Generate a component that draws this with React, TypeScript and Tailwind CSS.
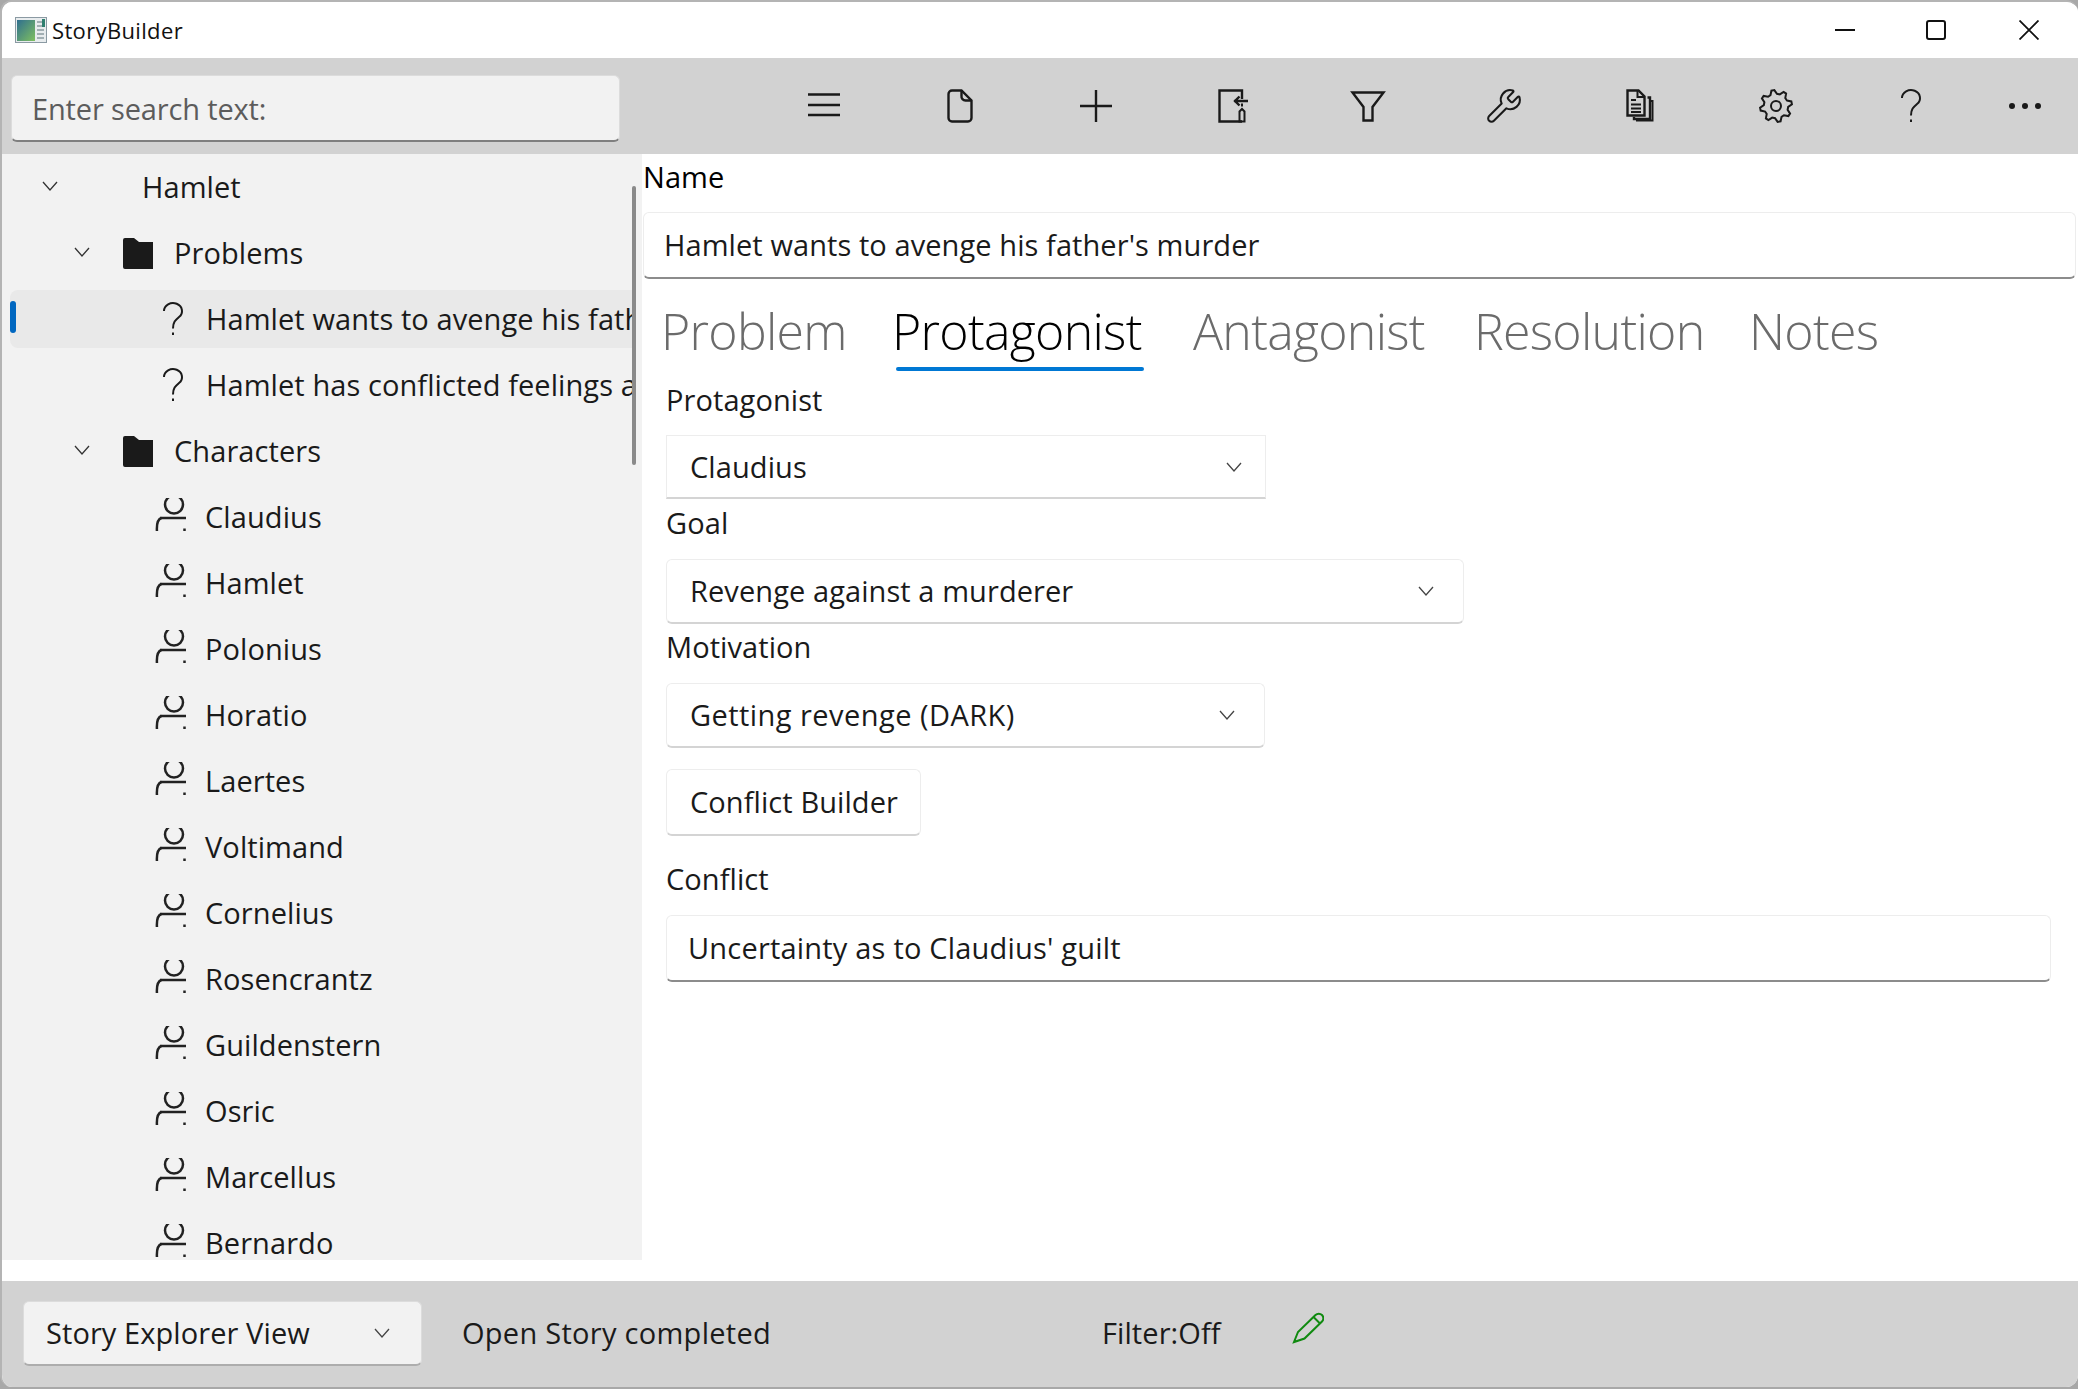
import React from 'react';
import { Wrench } from 'lucide-react';

const characters = ['Claudius', 'Hamlet', 'Polonius', 'Horatio', 'Laertes', 'Voltimand', 'Cornelius', 'Rosencrantz', 'Guildenstern', 'Osric', 'Marcellus', 'Bernardo'];

const Icon: React.FC<{ children: React.ReactNode; className?: string }> = ({ children, className }) => (
    <svg viewBox="0 0 40 40" fill="none" stroke="#1a1a1a" strokeWidth="2.4" className={className ?? 'w-10 h-10'}>
        {children}
    </svg>
);

const gearPath = () => {
    const pts: string[] = [];
    for (let i = 0; i < 8; i++) {
        const a = (i * Math.PI) / 4 - Math.PI / 8;
        const step = Math.PI / 4;
        [[-0.1, 12.2], [0.13, 16], [0.37, 16], [0.6, 12.2]].forEach(([t, r]) => {
            const th = a + t * step;
            pts.push(`${(20 + r * Math.cos(th)).toFixed(2)} ${(20 + r * Math.sin(th)).toFixed(2)}`);
        });
    }
    return `M${pts.join('L')}Z`;
};

const HelpGlyph: React.FC<{ className?: string }> = ({ className }) => (
    <Icon className={className}>
        <path d="M11 12a9 8 0 1 1 15 6c-3.500 3-6 5-6 11.500" strokeWidth="2" />
        <path d="M20 33.500v2.500" strokeWidth="2" />
    </Icon>
);

const Chevron: React.FC<{ className?: string; color?: string }> = ({ className, color }) => (
    <svg viewBox="0 0 20 12" fill="none" stroke={color ?? '#333'} strokeWidth="1.3" className={className ?? 'w-5 h-3'}>
        <path d="M3 2l7 8 7-8" />
    </svg>
);

// the glyph is clipped top and bottom in the app, so the viewBox cuts it the same way
const PersonIcon = () => (
    <svg viewBox="0 0 32 33" fill="none" stroke="#222" strokeWidth="2.500" className="w-8 h-[33px] shrink-0 ml-[-1px] mt-[-5px]">
        <circle cx="19" cy="6.500" r="9" />
        <path d="M5 20h26" />
        <path d="M6.500 20C3 21 1.500 27 2 34" />
        <path d="M29.500 30.500V34" />
    </svg>
);

const FolderIcon = () => (
    <svg viewBox="0 0 32 32" className="w-8 h-8 ml-[30px]" fill="#1a1a1a">
        <path d="M1 3a2 2 0 0 1 2-2h9l5 4h14v27H3a2 2 0 0 1-2-2z" />
    </svg>
);

const TreeRow: React.FC<{ pad: string; children: React.ReactNode; selected?: boolean }> = ({ pad, children, selected }) => (
    <div className={`h-[66px] flex items-center whitespace-nowrap overflow-hidden relative ${pad}`}>
        {selected && (
            <>
                <div className="absolute left-[8px] right-0 top-[4px] bottom-[4px] bg-[#e9e9e9] rounded-l-[8px]" />
                <div className="absolute left-[8px] top-[15px] w-[6px] h-[32px] bg-[#0067c0] rounded-[3px]" />
            </>
        )}
        <div className="relative flex items-center">{children}</div>
    </div>
);

const Combo: React.FC<{ label: string; className: string; labelClass?: string }> = ({ label, className, labelClass }) => (
    <div className={`flex items-center justify-between bg-white border border-[#ededed] border-b-2 border-b-[#d4d4d4] pl-[23px] ${className}`}>
        <span className={labelClass}>{label}</span>
        <Chevron className="w-5 h-3" color="#444" />
    </div>
);

const ToolButton: React.FC<{ children: React.ReactNode; className?: string }> = ({ children, className }) => (
    <div className={`flex items-center justify-center ${className ?? 'w-[136px]'}`}>{children}</div>
);

export default function App() {
    return (
        <div className="w-[2078px] h-[1389px] bg-[#a8a8a8] overflow-hidden font-['Open_Sans',sans-serif] text-[#1a1a1a] text-[29px] tracking-[0.08px]">
            <div className="w-full h-[1387px] rounded-[12px] overflow-hidden flex flex-col bg-white border-t-2 border-l-2 border-[#b4b4b4]">
                {/* title bar */}
                <div className="h-[56px] bg-white flex items-center justify-between shrink-0">
                    <div className="flex items-center pl-[13px] gap-[5px] text-[22px] tracking-[0.35px] text-[#111]">
                        <svg viewBox="0 0 32 26" className="w-8 h-[26px]">
                            <defs>
                                <linearGradient id="appicon" x1="0" y1="0" x2="1" y2="1">
                                    <stop offset="0" stopColor="#2f6f8f" />
                                    <stop offset="1" stopColor="#7fc060" />
                                </linearGradient>
                            </defs>
                            <rect x="0.500" y="0.500" width="31" height="25" fill="#e8ecee" stroke="#8b9aa3" />
                            <rect x="2" y="3" width="18" height="21" fill="url(#appicon)" />
                            <path d="M22 5h7M22 9h7M22 13h7M22 17h7M22 21h7" stroke="#8a9aa0" strokeWidth="1.400" />
                            <rect x="27" y="2" width="3" height="8" fill="#2f7f6f" />
                        </svg>
                        <span>StoryBuilder</span>
                    </div>
                    <div className="flex items-center pr-[1px]">
                        <div className="w-[91px] flex justify-center">
                            <svg viewBox="0 0 20 20" className="w-5 h-5" stroke="#111" strokeWidth="2"><path d="M0 10h20" /></svg>
                        </div>
                        <div className="w-[91px] flex justify-center">
                            <svg viewBox="0 0 20 20" className="w-5 h-5" fill="none" stroke="#111" strokeWidth="2"><rect x="1" y="1" width="18" height="18" rx="2" /></svg>
                        </div>
                        <div className="w-[96px] flex justify-center">
                            <svg viewBox="0 0 20 20" className="w-5 h-5" fill="none" stroke="#111" strokeWidth="1.800"><path d="M0.500 0.500l19 19M19.500 0.500l-19 19" /></svg>
                        </div>
                    </div>
                </div>

                {/* toolbar */}
                <div className="h-[96px] bg-[#d2d2d2] flex items-start shrink-0">
                    <div className="ml-[9px] mt-[17px] w-[609px] h-[67px] bg-[#f2f2f2] rounded-[6px] border border-[#dcdcdc] border-b-2 border-b-[#7f7f7f] flex items-center pl-[20px] text-[#5c5c5c] pt-[1px] tracking-[-0.15px]">
                        Enter search text:
                    </div>
                    <div className="ml-[136px] mt-[28px] flex h-[40px]">
                        <ToolButton>
                            <Icon><path d="M4 8.500h32M4 19h32M4 29h32" /></Icon>
                        </ToolButton>
                        <ToolButton>
                            <Icon>
                                <path d="M12 4.500h9.500l10 10V32a3.500 3.500 0 0 1-3.500 3.500H12A3.500 3.500 0 0 1 8.500 32V8A3.500 3.500 0 0 1 12 4.500z" />
                                <path d="M21.500 4.500V10a4 4 0 0 0 4 4.500h6" />
                            </Icon>
                        </ToolButton>
                        <ToolButton>
                            <Icon><path d="M4 20h32M20 4v32" /></Icon>
                        </ToolButton>
                        <ToolButton>
                            <Icon>
                                <path d="M30 13V4.500H7.500V35.500H30" />
                                <path d="M36 15H22M27.500 10.500L23 15l4.500 4.500" />
                                <path d="M30 17.500v3M27.500 35.500V25.500l2.500-2.500 2.500 2.500v10z" strokeWidth="2" />
                            </Icon>
                        </ToolButton>
                        <ToolButton>
                            <Icon><path d="M4.500 6.500h31L24.500 21v13.500h-9V21z" /></Icon>
                        </ToolButton>
                        <ToolButton>
                            <Wrench className="w-[38px] h-[38px] text-[#1a1a1a]" strokeWidth={1.300} />
                        </ToolButton>
                        <ToolButton>
                            <Icon>
                                <path d="M7.500 4.500h11l6 6v19h-17z" />
                                <path d="M17.500 4.500v6.500h7" strokeWidth="2" />
                                <path d="M11 14h5M11 18.500h10M11 22.500h10M11 26h10" strokeWidth="2" />
                                <path d="M27.500 11.500h2.500v21.500H14V31" />
                                <path d="M30 15h2.500v19.500H17V33" strokeWidth="2" />
                            </Icon>
                        </ToolButton>
                        <ToolButton>
                            <Icon>
                                <path d={gearPath()} strokeWidth="2" />
                                <circle cx="20" cy="20" r="5" strokeWidth="2" />
                            </Icon>
                        </ToolButton>
                        <ToolButton className="w-[136px] pr-[2px]">
                            <HelpGlyph className="w-10 h-10" />
                        </ToolButton>
                        <ToolButton className="w-[90px]">
                            <svg viewBox="0 0 32 8" className="w-8 h-2" fill="#1a1a1a">
                                <circle cx="3" cy="4" r="3" /><circle cx="16" cy="4" r="3" /><circle cx="29" cy="4" r="3" />
                            </svg>
                        </ToolButton>
                    </div>
                </div>

                {/* body */}
                <div className="flex-1 flex min-h-0">
                    <div className="w-[640px] h-[1106px] bg-[#f2f2f2] overflow-hidden relative shrink-0 mb-[21px]">
                        <TreeRow pad="pl-[38px]">
                            <Chevron className="w-5 h-3 mt-[-3px]" />
                            <span className="ml-[82px]">Hamlet</span>
                        </TreeRow>
                        <TreeRow pad="pl-[70px]">
                            <Chevron className="w-5 h-3 mt-[-3px]" />
                            <FolderIcon />
                            <span className="ml-[20px]">Problems</span>
                        </TreeRow>
                        <TreeRow pad="pl-[151px] mr-[8px]" selected>
                            <HelpGlyph className="w-10 h-10" />
                            <span className="ml-[13px]">Hamlet wants to avenge his father's murder</span>
                        </TreeRow>
                        <TreeRow pad="pl-[151px] mr-[8px]">
                            <HelpGlyph className="w-10 h-10" />
                            <span className="ml-[13px]">Hamlet has conflicted feelings about revenge</span>
                        </TreeRow>
                        <TreeRow pad="pl-[70px]">
                            <Chevron className="w-5 h-3 mt-[-3px]" />
                            <FolderIcon />
                            <span className="ml-[20px]">Characters</span>
                        </TreeRow>
                        {characters.map((name) => (
                            <TreeRow key={name} pad="pl-[154px]">
                                <PersonIcon />
                                <span className="ml-[18px]">{name}</span>
                            </TreeRow>
                        ))}
                        <div className="absolute left-[630px] top-[32px] w-[4px] h-[279px] bg-[#8a8a8a] rounded-[2px]" />
                    </div>

                    <div className="flex-1 min-w-0 pl-[1px] pr-[2px]">
                        <div className="h-[58px] leading-[46px] text-black">Name</div>
                        <div className="h-[67px] bg-white border border-[#ededed] border-b-2 border-b-[#8c8c8c] rounded-[6px] flex items-center pl-[20px]">
                            Hamlet wants to avenge his father's murder
                        </div>
                        <div className="h-[92px] flex items-start pl-[18px] text-[50px] font-light tracking-[-0.7px] leading-[72px] pt-[16px] text-[#6b6b6b]">
                            <div className="w-[231px]">Problem</div>
                            <div className="w-[301px] text-black">
                                Protagonist
                                <div className="ml-[4px] w-[248px] h-[4px] rounded-[2px] bg-[#0078d4]" />
                            </div>
                            <div className="w-[281px]">Antagonist</div>
                            <div className="w-[275px]">Resolution</div>
                            <div>Notes</div>
                        </div>
                        <div className="pl-[23px]">
                            <div className="h-[64px] leading-[58px]">Protagonist</div>
                            <Combo label="Claudius" className="w-[600px] h-[64px] pr-[21px]" />
                            <div className="h-[60px] leading-[48px]">Goal</div>
                            <Combo label="Revenge against a murderer" className="w-[798px] h-[65px] rounded-[6px] pr-[27px]" />
                            <div className="h-[59px] leading-[46px]">Motivation</div>
                            <Combo label="Getting revenge (DARK)" labelClass="tracking-[0.45px]" className="w-[599px] h-[65px] rounded-[6px] pr-[27px]" />
                            <div className="mt-[21px] w-[255px] h-[67px] bg-white border border-[#ededed] border-b-2 border-b-[#d4d4d4] rounded-[6px] flex items-center pl-[23px]">
                                Conflict Builder
                            </div>
                            <div className="h-[79px] leading-[86px]">Conflict</div>
                            <div className="w-[1385px] h-[67px] bg-white border border-[#ededed] border-b-2 border-b-[#8c8c8c] rounded-[6px] flex items-center pl-[21px] tracking-[0.2px]">
                                Uncertainty as to Claudius' guilt
                            </div>
                        </div>
                    </div>
                </div>

                {/* status bar */}
                <div className="h-[106px] bg-[#d2d2d2] flex items-center shrink-0 pb-[2px]">
                    <div className="ml-[21px] w-[399px] h-[65px] bg-[#f2f2f2] border border-[#dcdcdc] border-b-2 border-b-[#adadad] rounded-[6px] flex items-center justify-between pl-[22px] pr-[29px]">
                        <span>Story Explorer View</span>
                        <Chevron className="w-5 h-3" color="#444" />
                    </div>
                    <span className="ml-[40px] w-[640px] tracking-[0.28px]">Open Story completed</span>
                    <span className="w-[190px]">Filter:Off</span>
                    <svg viewBox="0 0 32 32" fill="none" stroke="#108a10" strokeWidth="2" className="w-8 h-8 mt-[-10px]">
                        <path d="M2 30l4-10L23.500 3a4.500 4.500 0 0 1 6.500 6.500L12.500 26.500z" />
                        <path d="M21.500 5l6.500 6.500" />
                    </svg>
                </div>
            </div>
        </div>
    );
}
